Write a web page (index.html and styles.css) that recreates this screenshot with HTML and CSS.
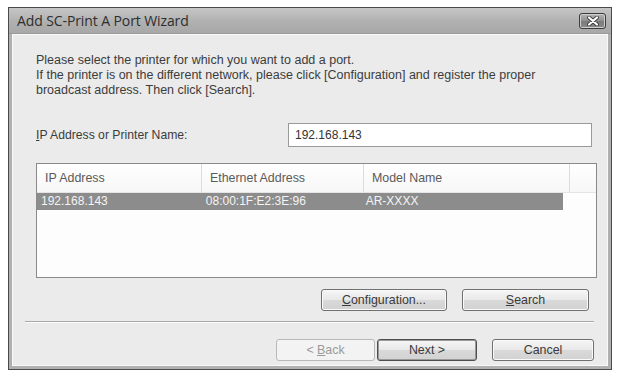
FILE: index.html
```html
<!DOCTYPE html>
<html>
<head>
<meta charset="utf-8">
<link rel="stylesheet" href="styles.css">
</head>
<body>
<div class="window">
  <div class="titlebar">
    <span class="title">Add SC-Print A Port Wizard</span>
    <span class="close">
      <svg width="16" height="10" viewBox="0 0 16 10"><path d="M4 1.5 L12 8.5 M12 1.5 L4 8.5" stroke="#3a3a3a" stroke-width="3.8" stroke-linecap="round"/><path d="M4 1.5 L12 8.5 M12 1.5 L4 8.5" stroke="#ffffff" stroke-width="2.2" stroke-linecap="round"/></svg>
    </span>
  </div>
  <div class="body">
    <p class="intro">Please select the printer for which you want to add a port.<br>If the printer is on the different network, please click [Configuration] and register the proper<br>broadcast address. Then click [Search].</p>
    <div class="field">
      <label class="label"><u>I</u>P Address or Printer Name:</label>
      <div class="input">192.168.143</div>
    </div>
    <div class="list">
      <div class="list-head">
        <div class="col c1">IP Address</div>
        <div class="col c2">Ethernet Address</div>
        <div class="col c3">Model Name</div>
        <div class="col c4"></div>
      </div>
      <div class="row selected">
        <div class="cell c1">192.168.143</div>
        <div class="cell c2">08:00:1F:E2:3E:96</div>
        <div class="cell c3">AR-XXXX</div>
      </div>
    </div>
    <div class="actions">
      <button class="btn config"><u>C</u>onfiguration...</button>
      <button class="btn search"><u>S</u>earch</button>
    </div>
    <div class="sep"></div>
    <div class="nav">
      <button class="btn back" disabled>&lt; <u>B</u>ack</button>
      <button class="btn next">Next &gt;</button>
      <button class="btn cancel">Cancel</button>
    </div>
  </div>
</div>
</body>
</html>
```
FILE: styles.css
```css
html, body {
  margin: 0;
  padding: 0;
  background: #ffffff;
}
body {
  font-family: "Liberation Sans", Arial, sans-serif;
  font-size: 12px;
  color: #3c3c3c;
}
.window {
  margin: 7px 0 0 8px;
  width: 604px;
  height: 363px;
  border: 1px solid #4a4a4a;
  box-sizing: border-box;
  display: flex;
  flex-direction: column;
  background: #b0b0b0;
}
.titlebar {
  height: 25px;
  flex: none;
  display: flex;
  align-items: center;
  justify-content: space-between;
  padding: 0 5px 0 8px;
  background: linear-gradient(#c6c6c6, #b0b0b0 55%, #a8a8a8);
  border-bottom: 1px solid #9a9a9a;
}
.title {
  font-family: "Open Sans", "Noto Sans", sans-serif;
  font-size: 14px;
  color: #2e2e2e;
  letter-spacing: -0.1px;
}
.close {
  width: 27px;
  height: 16px;
  box-sizing: border-box;
  border: 1px solid #3c3c3c;
  border-radius: 3px;
  background: linear-gradient(#b4b4b4, #8e8e8e 50%, #7a7a7a 51%, #8a8a8a);
  display: flex;
  align-items: center;
  justify-content: center;
  margin-top: 1px;
  box-shadow: inset 0 0 0 1px #cfcfcf;
}
.body {
  flex: 1;
  background: #ebebeb;
  margin: 0 3px 3px 3px;
  border: 1px solid #f8f8f8;
  padding: 18px 12px 0 23px;
  display: flex;
  flex-direction: column;
}
.intro {
  margin: 0;
  line-height: 15px;
  font-size: 12.5px;
}
.field {
  display: flex;
  align-items: center;
  margin-top: 25px;
}
.label {
  width: 252px;
  font-size: 12.2px;
}
.label u, .btn u {
  text-decoration: underline;
}
.input {
  width: 304px;
  height: 24px;
  box-sizing: border-box;
  border: 1px solid #9a9a9a;
  background: #ffffff;
  padding: 0 6px;
  line-height: 22px;
  color: #333;
}
.list {
  margin-top: 16px;
  width: 561px;
  height: 115px;
  box-sizing: border-box;
  border: 1px solid #8a8a8a;
  background: #fdfdfd;
}
.list-head {
  display: flex;
  height: 28px;
  border-bottom: 1px solid #e4e4e4;
  background: linear-gradient(#ffffff, #f7f7f7);
}
.col {
  box-sizing: border-box;
  border-right: 1px solid #dcdcdc;
  padding-left: 8px;
  line-height: 28px;
  color: #5a5a5a;
  font-size: 12.4px;
}
.c1 { width: 165px; }
.c2 { width: 162px; }
.c3 { width: 206px; }
.c4 { flex: 1; border-right: none; }
.row {
  display: flex;
  height: 17px;
  line-height: 17px;
  width: 526px;
}
.selected {
  background: #8c8c8c;
  color: #f4f4f4;
}
.cell {
  box-sizing: border-box;
  padding-left: 4px;
  white-space: nowrap;
}
.row .c2 { padding-left: 6px; }
.row .c3 { padding-left: 6px; }
.actions {
  display: flex;
  margin-top: 11px;
  padding-left: 285px;
  gap: 15px;
}
.btn {
  font-family: "Liberation Sans", Arial, sans-serif;
  font-size: 12.4px;
  color: #3a3a3a;
  height: 22px;
  box-sizing: border-box;
  border: 1px solid #707070;
  border-radius: 3px;
  background: linear-gradient(#f6f6f6, #e8e8e8 50%, #d9d9d9 51%, #d2d2d2);
  box-shadow: inset 0 0 0 1px #fafafa;
  padding: 0;
}
.config { width: 126px; }
.search { width: 127px; }
.sep {
  margin: 10px 1px 0 -11px;
  height: 1px;
  background: #a8a8a8;
  border-bottom: 1px solid #fbfbfb;
}
.nav {
  display: flex;
  margin-top: 16px;
  padding-left: 240px;
}
.back {
  width: 99px;
  border-color: #b8b8b8;
  background: #f3f3f3;
  box-shadow: none;
  color: #9a9a9a;
}
.next {
  width: 100px;
  margin-left: 2px;
  border-color: #4e4e4e;
  box-shadow: inset 0 0 0 1px #9a9a9a;
}
.cancel {
  width: 102px;
  margin-left: 15px;
}
```
